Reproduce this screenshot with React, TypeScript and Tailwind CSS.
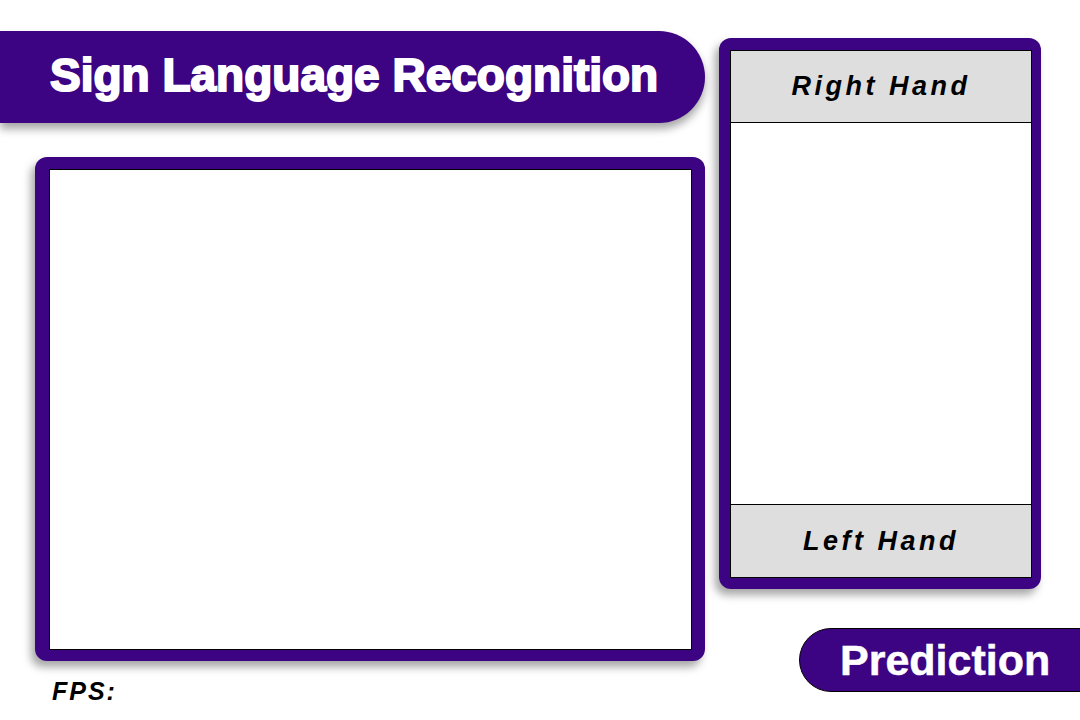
export default function App() {
  return (
    <div className="w-[1080px] h-[720px] bg-white overflow-hidden flex font-['Liberation_Sans',Arial,sans-serif]">
      {/* left column: title, camera view, fps */}
      <div className="w-[705px] flex flex-col">
        <div className="mt-[31px] h-[92px] w-[705px] bg-[#3c0482] rounded-r-full flex items-center pl-[50px] pb-[4px] shadow-[0px_6px_8px_rgba(0,0,0,0.35)]">
          <h1 className="text-white text-[46px] font-bold leading-none [-webkit-text-stroke:2px_white]">
            Sign Language Recognition
          </h1>
        </div>
        <div className="mt-[34px] ml-[35px] w-[670px] h-[504px] bg-[#3c0482] rounded-[12px] pt-[12px] pb-[11px] pl-[14px] pr-[13px] shadow-[-4px_6px_8px_rgba(0,0,0,0.35)]">
          <div className="w-full h-full bg-white border border-black"></div>
        </div>
        <p className="mt-[18px] ml-[52px] text-[25px] leading-none font-bold italic tracking-[2px] text-black">
          FPS:
        </p>
      </div>

      {/* right column: hand panels, prediction */}
      <div className="ml-[14px] flex-1 flex flex-col">
        <div className="mt-[38px] w-[322px] h-[551px] bg-[#3c0482] rounded-[12px] pt-[12px] pb-[11px] pl-[11px] pr-[9px] shadow-[-4px_6px_8px_rgba(0,0,0,0.35)]">
          <div className="w-full h-full bg-white border border-black flex flex-col">
            <div className="h-[72px] bg-[#dedede] border-b border-black flex items-center justify-center">
              <span className="text-[27px] font-bold italic tracking-[3.5px] text-black">Right Hand</span>
            </div>
            <div className="flex-1"></div>
            <div className="h-[73px] bg-[#dedede] border-t border-black flex items-center justify-center">
              <span className="text-[27px] font-bold italic tracking-[3.5px] text-black">Left Hand</span>
            </div>
          </div>
        </div>
        <div className="mt-[39px] ml-[80px] h-[64px] w-[300px] bg-[#3c0482] border border-black rounded-l-full flex items-center pl-[40px]">
          <span className="text-white text-[43px] font-bold leading-none [-webkit-text-stroke:0.5px_white]">Prediction</span>
        </div>
      </div>
    </div>
  );
}
